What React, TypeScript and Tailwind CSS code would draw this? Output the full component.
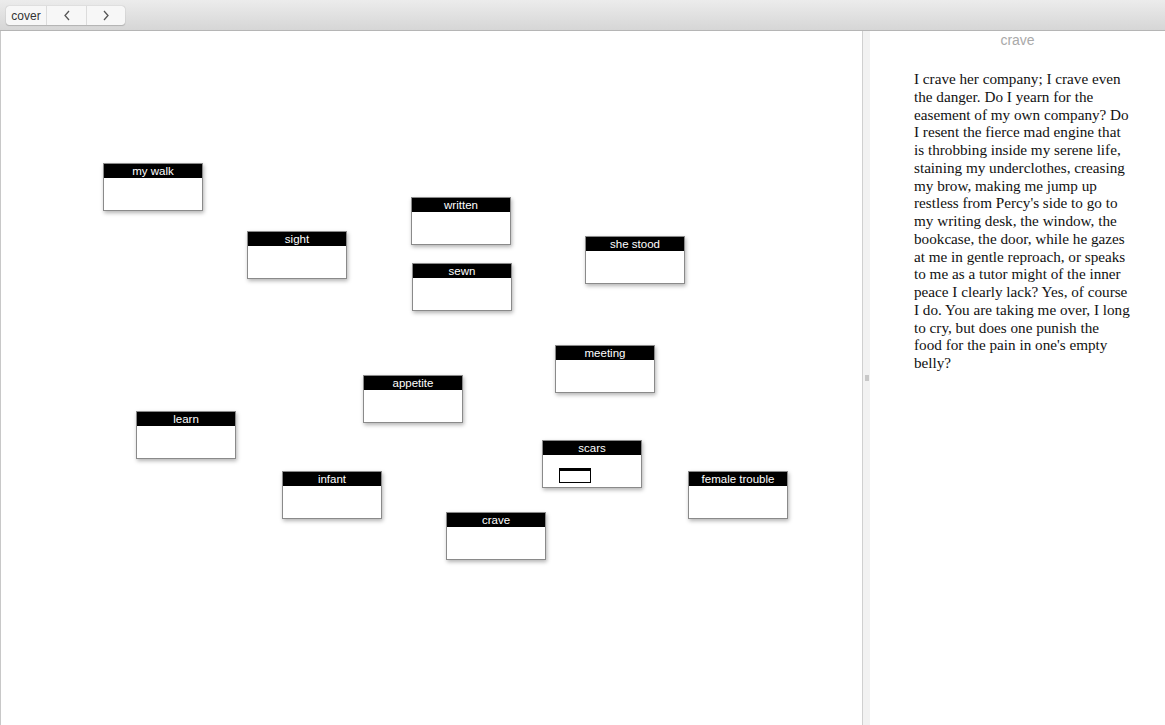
const nodes = [
  { label: "my walk", x: 102, y: 132 },
  { label: "written", x: 410, y: 166 },
  { label: "sight", x: 246, y: 200 },
  { label: "she stood", x: 584, y: 205 },
  { label: "sewn", x: 411, y: 232 },
  { label: "meeting", x: 554, y: 314 },
  { label: "appetite", x: 362, y: 344 },
  { label: "learn", x: 135, y: 380 },
  { label: "scars", x: 541, y: 409, field: true },
  { label: "infant", x: 281, y: 440 },
  { label: "female trouble", x: 687, y: 440 },
  { label: "crave", x: 445, y: 481 },
];

const lines = [
  "I crave her company; I crave even",
  "the danger. Do I yearn for the",
  "easement of my own company? Do",
  "I resent the fierce mad engine that",
  "is throbbing inside my serene life,",
  "staining my underclothes, creasing",
  "my brow, making me jump up",
  "restless from Percy's side to go to",
  "my writing desk, the window, the",
  "bookcase, the door, while he gazes",
  "at me in gentle reproach, or speaks",
  "to me as a tutor might of the inner",
  "peace I clearly lack? Yes, of course",
  "I do. You are taking me over, I long",
  "to cry, but does one punish the",
  "food for the pain in one's empty",
  "belly?",
];

const Node = ({ label, x, y, field }: { label: string; x: number; y: number; field?: boolean }) => (
  <div
    className="absolute w-[100px] h-[48px] bg-white border border-[#8a8a8a] shadow-[1px_2px_4px_rgba(0,0,0,0.3)]"
    style={{ left: x, top: y }}
  >
    <div className="h-[14px] bg-black text-white text-[11.5px] leading-[14px] text-center font-['Liberation_Sans',sans-serif]">
      {label}
    </div>
    {field && (
      <div className="ml-[16px] mt-[13px] w-[32px] h-[15px] border border-black border-t-[3px]" />
    )}
  </div>
);

export default function App() {
  return (
    <div className="w-[1165px] h-[725px] flex flex-col bg-white overflow-hidden">
      <div className="h-[31px] shrink-0 bg-gradient-to-b from-[#ececec] to-[#d6d6d6] border-b border-[#b5b5b5] flex items-start pt-[6px] pl-[6px]">
        <div className="flex h-[19px] rounded-[3px] bg-[#f7f7f7] shadow-[0_0_1px_rgba(0,0,0,0.35),0_1px_1px_rgba(0,0,0,0.15)] text-[12px] text-[#333] font-['Liberation_Sans',sans-serif]">
          <div className="w-[41px] flex items-center justify-center border-r border-[#dcdcdc]">cover</div>
          <div className="w-[40px] flex items-center justify-center border-r border-[#dcdcdc]">
            <svg width="8" height="11" viewBox="0 0 8 11"><path d="M6 1 L2 5.5 L6 10" fill="none" stroke="#555" strokeWidth="1.3" /></svg>
          </div>
          <div className="w-[38px] flex items-center justify-center">
            <svg width="8" height="11" viewBox="0 0 8 11"><path d="M2 1 L6 5.5 L2 10" fill="none" stroke="#555" strokeWidth="1.3" /></svg>
          </div>
        </div>
      </div>
      <div className="flex flex-1 min-h-0">
        <div className="relative w-[862px] shrink-0 border-l border-[#c8c8c8]">
          {nodes.map((n) => (
            <Node key={n.label} {...n} />
          ))}
        </div>
        <div className="w-[8px] shrink-0 bg-[#f2f2f2] border-l border-[#d0d0d0] flex items-center justify-center">
          <div className="w-[4px] h-[6px] bg-[#c8c8c8]" />
        </div>
        <div className="flex-1 flex flex-col">
          <div className="text-center text-[14px] text-[#a9a9a9] font-['Liberation_Sans',sans-serif] mt-[1px] leading-[16px]">crave</div>
          <div className="mt-[22px] pl-[44px] text-[15.2px] leading-[17.75px] text-[#111] font-['Liberation_Serif',serif]">
            {lines.map((l) => (
              <div key={l}>{l}</div>
            ))}
          </div>
        </div>
      </div>
    </div>
  );
}
